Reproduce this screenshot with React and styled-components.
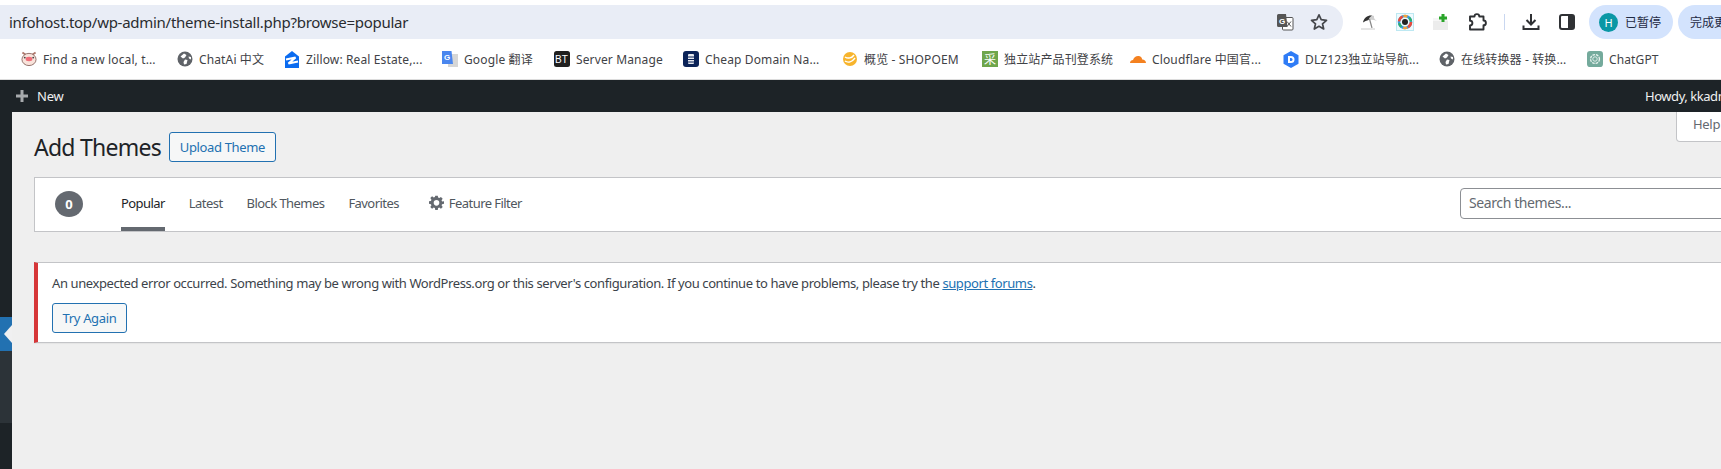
import React from "react";
import styled, { createGlobalStyle } from "styled-components";

const Global = createGlobalStyle`
  html, body { margin: 0; padding: 0; height: 469px; overflow: hidden; background: #f0f0f1; }
  * { box-sizing: border-box; }
  #root { width: 1721px; height: 469px; overflow: hidden; }
`;
const UI = `"Noto Sans", "Noto Sans CJK SC", sans-serif`;

const Page = styled.div`width: 1721px; height: 469px; display: flex; flex-direction: column; font-family: ${UI}; overflow: hidden;`;
const Toolbar = styled.div`height: 40px; flex: none; background: #fff; padding-top: 5px; display: flex; align-items: flex-start;`;
const Omnibox = styled.div`width: 1343px; height: 34px; flex: none; background: #e9edf6; border-radius: 0 17px 17px 0; display: flex; align-items: center; padding: 0 6px 0 9px;`;
const Url = styled.span`font-size: 15px; letter-spacing: -0.27px; color: #2a2c30; flex: 1; white-space: nowrap;`;
const ToolIcon = styled.span`width: ${p => p.$w || 36}px; height: 34px; flex: none; display: flex; align-items: center; justify-content: center;`;
const Actions = styled.div`display: flex; align-items: center; height: 34px; padding-left: 8px;`;
const Sep = styled.span`width: 1px; height: 16px; background: #c9d7f0; margin: 0 8px 0 9px; flex: none;`;
const Pill = styled.div`height: 34px; flex: none; background: #d3e3fd; border-radius: 17px; display: flex; align-items: center; color: #1f2a44; font-size: 12px; white-space: nowrap;`;
const ProfilePill = styled(Pill)`width: 84px; padding-left: 10px; gap: 7px; margin-left: 4px;`;
const UpdatePill = styled(Pill)`width: 60px; padding-left: 12px; margin-left: 5px; border-radius: 17px 0 0 17px;`;
const Avatar = styled.span`width: 19px; height: 19px; border-radius: 50%; background: #0a97a5; color: #fff; font-size: 11px; display: flex; align-items: center; justify-content: center;`;

const Bookmarks = styled.div`height: 39.5px; flex: none; background: #fff; border-bottom: 1px solid #dcdcdc; display: flex; align-items: center; padding-left: 21px;`;
const Bookmark = styled.div`width: ${p => p.$w}px; flex: none; display: flex; align-items: center; gap: 6px; font-size: 12px; color: #3f4246; white-space: nowrap; letter-spacing: 0.13px;`;
const FavSlot = styled.span`width: 16px; height: 16px; flex: none; display: flex; align-items: center; justify-content: center;`;

const AdminBar = styled.div`height: 32.5px; flex: none; background: #1d2327; color: #f0f0f1; font-size: 13px; display: flex; align-items: center; padding-left: 15px; letter-spacing: -0.2px;`;
const NewItem = styled.div`display: flex; align-items: center; gap: 8px;`;
const Howdy = styled.div`margin-left: auto; width: 76px; overflow: hidden; white-space: nowrap; letter-spacing: -0.45px;`;

const Body = styled.div`flex: 1; display: flex; min-height: 0;`;
const Side = styled.div`width: 12px; flex: none; background: #1d2327; display: flex; flex-direction: column;`;
const Spacer = styled.div`height: 205px; flex: none;`;
const Collapse = styled.div`height: 34px; flex: none; background: #2271b1; display: flex; align-items: center; justify-content: flex-end;`;
const Arrow = styled.div`width: 0; height: 0; border-style: solid; border-width: 9px 8px 9px 0; border-color: transparent #f0f0f1 transparent transparent;`;
const SideBlock = styled.div`height: 72px; flex: none; background: #2c3338;`;

const Main = styled.div`flex: 1; position: relative; padding: 20px 0 0 22px; background: #efefef; min-width: 0;`;
const HelpTab = styled.div`position: absolute; top: 0; left: 1664px; width: 80px; height: 30px; background: #fff; border: 1px solid #c3c4c7; border-top: 0; border-radius: 0 0 0 4px; color: #646970; font-size: 13px; padding: 3px 0 0 16px; letter-spacing: -0.3px;`;
const HeadRow = styled.div`display: flex; align-items: center; height: 30px; gap: 8px; margin-top: 0;`;
const Title = styled.h1`margin: -1px 0 0; font-size: 23px; font-weight: 400; color: #1d2327; letter-spacing: -0.75px; line-height: 30px;`;
const Btn = styled.div`display: flex; align-items: center; justify-content: center; height: 30px; width: ${p => p.$w}px; border: 1px solid #2271b1; border-radius: 3px; background: #f6f7f7; color: #2271b1; font-size: 13px; letter-spacing: -0.35px; flex: none;`;

const Filter = styled.div`margin-top: 15px; width: 1750px; height: 55px; background: #fff; border: 1px solid #c3c4c7; display: flex; align-items: stretch; padding-left: 20px;`;
const Count = styled.span`width: 28px; height: 26px; margin-top: 13px; border-radius: 50%; background: #646970; color: #fff; font-size: 13px; font-weight: 700; display: flex; align-items: center; justify-content: center; flex: none;`;
const Tabs = styled.div`display: flex; margin-left: 38px; gap: 24px;`;
const Tab = styled.div`height: 53px; display: flex; align-items: center; font-size: 13px; letter-spacing: -0.56px; color: ${p => p.$active ? "#1d2327" : "#50575e"}; border-bottom: 4px solid ${p => p.$active ? "#646970" : "transparent"}; padding-top: 0; white-space: nowrap;`;
const FeatureTab = styled(Tab)`margin-left: 6px; gap: 5px;`;
const Search = styled.div`margin: 10px 23px 0 auto; width: 300px; height: 31px; border: 1px solid #8c8f94; border-radius: 4px; background: #fff; color: #646970; font-size: 14px; padding: 0 0 2px 8px; display: flex; align-items: center; letter-spacing: -0.4px;`;

const Notice = styled.div`margin-top: 30px; width: 1750px; height: 81px; background: #fff; border: 1px solid #c3c4c7; border-left: 4px solid #d63638; padding: 10px 0 0 14px; box-shadow: 0 1px 1px rgba(0,0,0,.04);`;
const Msg = styled.p`margin: 0; height: 20px; line-height: 20px; font-size: 13px; color: #3c434a; letter-spacing: -0.4px; white-space: nowrap;`;
const NoticeLink = styled.a`color: #2271b1; text-decoration: underline;`;
const TryRow = styled.div`margin-top: 10px;`;

const Globe = () => (
  <svg width="16" height="16" viewBox="0 0 16 16"><circle cx="8" cy="8" r="7.5" fill="#5f6368"/><path d="M7 2.500 3.500 5.500 6 7.500 8 6.500 9.500 4ZM8 8.500 10.500 9 9.500 13 7 13.500 6.500 11ZM11.500 5.500 14 6 14 8.500 12 7.500Z" fill="#fff"/></svg>
);
const favicons = {
  pig: <svg width="17" height="16" viewBox="0 0 17 16"><path d="M1.500 1l3.500 2.500M15.500 1 12 3.500" stroke="#b0786c" strokeWidth="2"/><ellipse cx="8.500" cy="8.500" rx="7.500" ry="6.500" fill="#f9e3db" stroke="#8f6d66"/><ellipse cx="8.500" cy="8" rx="3.600" ry="2.400" fill="#ef6d78"/><circle cx="4" cy="6.500" r="1" fill="#444"/><circle cx="13" cy="6.500" r="1" fill="#444"/></svg>,
  globe: <Globe />,
  zillow: <svg width="16" height="17" viewBox="0 0 16 17"><path d="M8 0 15 5.500V17H1V5.500Z" fill="#0a6bf0"/><path d="M2 8.500 11.500 6.500 4.500 12.500 14 10.500" stroke="#fff" strokeWidth="2.200" fill="none"/></svg>,
  google: <svg width="16" height="16" viewBox="0 0 16 16"><rect x="6" y="3" width="10" height="13" fill="#d6d6d6"/><path d="M0 0H9.500L11 13H0Z" fill="#4a86ee"/><text x="2" y="9" fontSize="8" fontFamily="Liberation Sans" fontWeight="700" fill="#fff">G</text></svg>,
  bt: <svg width="16" height="16" viewBox="0 0 16 16"><rect width="16" height="16" rx="2.500" fill="#20201f"/><text x="1" y="12" fontSize="10" fontFamily="Liberation Sans" fill="#fff">BT</text></svg>,
  cheap: <svg width="16" height="16" viewBox="0 0 16 16"><rect width="16" height="16" rx="3" fill="#0b2358"/><rect x="5" y="3" width="6" height="10" rx="1" fill="#e7eaf0"/><path d="M5 6h6M5 8.500h6M5 11h6" stroke="#0b2358"/></svg>,
  shopoem: <svg width="16" height="16" viewBox="0 0 16 16"><circle cx="8" cy="8" r="7" fill="#f7b42c"/><path d="M3 6c3 2 7 1 9-2M3 10c3 2 7 1 10-3" stroke="#fff" strokeWidth="1.500" fill="none"/></svg>,
  cai: <svg width="16" height="16" viewBox="0 0 16 16"><rect width="16" height="16" fill="#6fa64c"/><text x="2" y="12.500" fontSize="12" fontFamily="Noto Sans CJK SC" fill="#fff">采</text></svg>,
  cf: <svg width="16" height="16" viewBox="0 0 16 16"><path d="M0 12c0-2 1.500-3 3-3 1-3 3.500-4.500 6-4 2 .4 3 2 3.300 3.500 2 0 3.700 1.500 3.700 3.500Z" fill="#f48120"/></svg>,
  dlz: <svg width="16" height="17" viewBox="0 0 16 17"><path d="M8 0 15.500 4.200V12.800L8 17 .5 12.800V4.200Z" fill="#2f7cf6"/><path d="M5 5h3a3.500 3.500 0 0 1 0 7H5Z" fill="#fff"/><path d="M7 7h1a1.500 1.500 0 0 1 0 3H7Z" fill="#2f7cf6"/></svg>,
  gpt: <svg width="18" height="18" viewBox="0 0 18 18"><rect width="18" height="18" rx="3.500" fill="#74aa9c"/><circle cx="9" cy="9" r="5" fill="none" stroke="#e8f2ef" strokeWidth="1.500" strokeDasharray="3 1"/><circle cx="9" cy="9" r="2.500" fill="none" stroke="#e8f2ef"/></svg>,
};
const marks = [
  ["pig", "Find a new local, t...", 156],
  ["globe", "ChatAi 中文", 107],
  ["zillow", "Zillow: Real Estate,...", 158],
  ["google", "Google 翻译", 112],
  ["bt", "Server Manage", 129],
  ["cheap", "Cheap Domain Na...", 159],
  ["shopoem", "概览 - SHOPOEM", 140],
  ["cai", "独立站产品刊登系统", 148],
  ["cf", "Cloudflare 中国官...", 153],
  ["dlz", "DLZ123独立站导航...", 156],
  ["globe", "在线转换器 - 转换...", 148],
  ["gpt", "ChatGPT", 100],
];

export default function App() {
  return (
    <Page>
      <Global />
      <Toolbar>
        <Omnibox>
          <Url>infohost.top/wp-admin/theme-install.php?browse=popular</Url>
          <ToolIcon $w={32}>
            <svg width="18" height="18" viewBox="0 0 18 18"><rect x="6.500" y="4.500" width="10.500" height="12.500" rx="1" fill="#fff" stroke="#555"/><path d="M1 2.500A1.500 1.500 0 0 1 2.500 1H10l1.500 13H2.500A1.500 1.500 0 0 1 1 12.500Z" fill="#555"/><text x="3" y="10.500" fontSize="8" fontWeight="700" fontFamily="Liberation Sans" fill="#fff">G</text><path d="M11 8.500l4 5M15 8.500l-4 5" stroke="#555"/></svg>
          </ToolIcon>
          <ToolIcon $w={36}>
            <svg width="18" height="18" viewBox="0 0 18 18"><path d="M9 1.800 11.200 6.700 16.500 7.300 12.500 10.800 13.700 16 9 13.300 4.300 16 5.500 10.800 1.500 7.300 6.800 6.700Z" fill="none" stroke="#45474b" strokeWidth="1.700" strokeLinejoin="round"/></svg>
          </ToolIcon>
        </Omnibox>
        <Actions>
          <ToolIcon $w={36}>
            <svg width="18" height="18" viewBox="0 0 18 18"><path d="M3 9.500C4 4.500 9 1.500 14 3 13.500 5 15 7 17 8 12 6 7 6.500 3 9.500Z" fill="#cfcfcf"/><path d="M3 9.500C4 4.500 8 2 12 2.500 9.500 4 9 5.500 8.500 7 6.500 7.500 4.500 8.500 3 9.500Z" fill="#333"/><path d="M9.500 6 12 15" stroke="#888" strokeWidth="1.200"/><path d="M1 16h14" stroke="#ddd" strokeWidth="1.500"/></svg>
          </ToolIcon>
          <ToolIcon $w={36}>
            <svg width="18" height="18" viewBox="0 0 18 18"><rect x=".5" y=".5" width="17" height="17" fill="#eefafd" stroke="#bde8f2"/><circle cx="9" cy="9" r="6" fill="none" stroke="#3b9ae1" strokeWidth="2.500"/><circle cx="9" cy="9" r="6" fill="none" stroke="#e94b3c" strokeWidth="2.500" strokeDasharray="6 13"/><circle cx="9" cy="9" r="6" fill="none" stroke="#f2a33a" strokeWidth="2.500" strokeDasharray="4 15" strokeDashoffset="-7"/><circle cx="9" cy="9" r="6" fill="none" stroke="#2fae6b" strokeWidth="2.500" strokeDasharray="4 15" strokeDashoffset="-13"/><circle cx="9" cy="9" r="3" fill="#222"/></svg>
          </ToolIcon>
          <ToolIcon $w={36}>
            <svg width="18" height="18" viewBox="0 0 18 18"><path d="M1 5h15v12H1Z" fill="#ececec"/><path d="M1 5h15v3H1Z" fill="#f6f6f6"/><path d="M11 1v8M7 5h8" stroke="#2aa52a" strokeWidth="3"/></svg>
          </ToolIcon>
          <ToolIcon $w={36}>
            <svg width="20" height="20" viewBox="0 0 20 20"><path d="M3 4.500h4.500a2.400 2.400 0 0 1 4.800 0H16.500V8.500a2.400 2.400 0 0 1 0 4.800V17.500H3V13.500a2.300 2.300 0 0 0 0-4.800Z" fill="none" stroke="#2f3134" strokeWidth="1.900" strokeLinejoin="round"/></svg>
          </ToolIcon>
          <Sep />
          <ToolIcon $w={36}>
            <svg width="18" height="18" viewBox="0 0 18 18"><path d="M9 1v10M4.500 7 9 11.500 13.500 7M1.500 12.500V16h15v-3.500" fill="none" stroke="#2f3134" strokeWidth="2"/></svg>
          </ToolIcon>
          <ToolIcon $w={36}>
            <svg width="16" height="16" viewBox="0 0 16 16"><rect x="1" y="1" width="14" height="14" rx="2" fill="none" stroke="#2f3134" strokeWidth="2"/><rect x="9" y="1" width="6" height="14" fill="#2f3134"/></svg>
          </ToolIcon>
          <ProfilePill><Avatar>H</Avatar>已暂停</ProfilePill>
          <UpdatePill>完成更新</UpdatePill>
        </Actions>
      </Toolbar>
      <Bookmarks>
        {marks.map(([k, t, w]) => (
          <Bookmark key={t} $w={w}><FavSlot>{favicons[k]}</FavSlot>{t}</Bookmark>
        ))}
      </Bookmarks>
      <AdminBar>
        <NewItem>
          <svg width="14" height="14" viewBox="0 0 14 14"><path d="M7 1v12M1 7h12" stroke="#a7aaad" strokeWidth="3"/></svg>
          New
        </NewItem>
        <Howdy>Howdy, kkadmin</Howdy>
      </AdminBar>
      <Body>
        <Side>
          <Spacer />
          <Collapse><Arrow /></Collapse>
          <SideBlock />
        </Side>
        <Main>
          <HelpTab>Help</HelpTab>
          <HeadRow>
            <Title>Add Themes</Title>
            <Btn $w={107}>Upload Theme</Btn>
          </HeadRow>
          <Filter>
            <Count>0</Count>
            <Tabs>
              <Tab $active>Popular</Tab>
              <Tab>Latest</Tab>
              <Tab>Block Themes</Tab>
              <Tab>Favorites</Tab>
              <FeatureTab>
                <svg width="15" height="15" viewBox="0 0 24 24" fill="#646970"><path d="M10 1h4l.6 3.100 1.900.8 2.600-1.800 2.800 2.800-1.800 2.600.8 1.900L24 10v4l-3.100.6-.8 1.900 1.800 2.600-2.800 2.800-2.600-1.800-1.900.8L14 24h-4l-.6-3.100-1.900-.8-2.600 1.800-2.800-2.800 1.800-2.600-.8-1.900L0 14v-4l3.100-.6.8-1.900-1.800-2.600 2.800-2.800 2.600 1.800 1.900-.8ZM12 8a4.500 4.500 0 1 0 0 9 4.500 4.500 0 0 0 0-9Z" fillRule="evenodd"/></svg>
                Feature Filter
              </FeatureTab>
            </Tabs>
            <Search>Search themes...</Search>
          </Filter>
          <Notice>
            <Msg>An unexpected error occurred. Something may be wrong with WordPress.org or this server's configuration. If you continue to have problems, please try the <NoticeLink>support forums</NoticeLink>.</Msg>
            <TryRow><Btn $w={75}>Try Again</Btn></TryRow>
          </Notice>
        </Main>
      </Body>
    </Page>
  );
}
